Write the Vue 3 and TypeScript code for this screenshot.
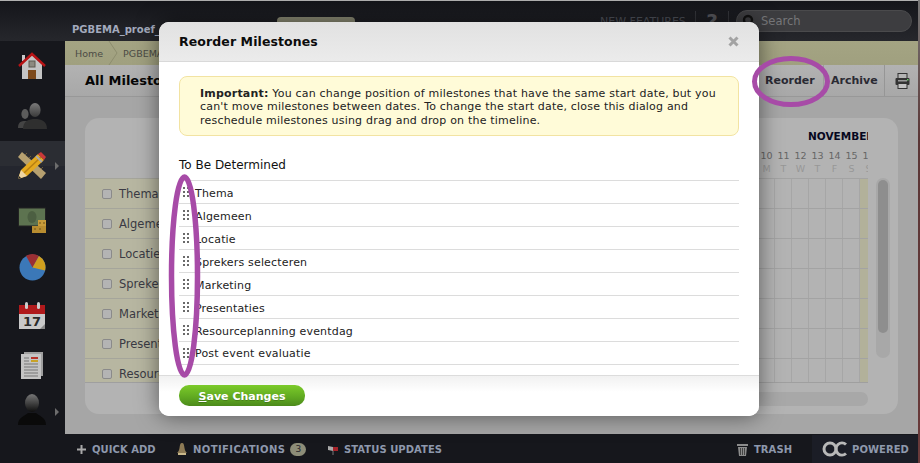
<script setup lang="ts">
const labels = ['Thema', 'Algemeen', 'Locatie', 'Sprekers selecteren', 'Marketing', 'Presentaties', 'Resourceplanning eventdag']
const milestones = ['Thema', 'Algemeen', 'Locatie', 'Sprekers selecteren', 'Marketing', 'Presentaties', 'Resourceplanning eventdag', 'Post event evaluatie']
const days = [
  { n: 10, d: 'M' }, { n: 11, d: 'T' }, { n: 12, d: 'W' }, { n: 13, d: 'T' },
  { n: 14, d: 'F' }, { n: 15, d: 'S' }, { n: 16, d: 'S' },
]
</script>

<template>
  <div class="app">
    <div class="frame">
      <header class="topbar">
        <span class="project">PGBEMA_proef_</span>
        <span class="tab"></span>
        <span class="features">NEW FEATURES</span>
        <span class="divider"></span>
        <span class="help">?</span>
        <span class="divider"></span>
        <div class="search">
          <svg width="14" height="14" viewBox="0 0 14 14"><circle cx="6" cy="6" r="4" fill="none" stroke="#111" stroke-width="2.4"/><path d="M9 9l4 4" stroke="#111" stroke-width="2.4"/></svg>
          <span>Search</span>
        </div>
      </header>

      <div class="middle">
        <nav class="sidebar">
          <div class="nav h50">
            <svg width="28" height="28" viewBox="0 0 28 28">
              <rect x="4" y="3" width="3" height="6" fill="#c9c9c9"/>
              <path d="M4 12 14 3l10 9v15H4z" fill="#c4c4c4"/>
              <path d="M1 14 14 2l13 12" fill="none" stroke="#b81416" stroke-width="2.4"/>
              <rect x="11" y="9" width="6" height="6" fill="#8d8a80" stroke="#5e5a50"/>
              <rect x="10" y="18" width="8" height="9" fill="#7d4a1c"/>
            </svg>
          </div>
          <div class="nav h50">
            <svg width="29" height="26" viewBox="0 0 29 26">
              <defs>
                <linearGradient id="u" x1="0" x2="0" y1="0" y2="1"><stop offset="0" stop-color="#7a7a7a"/><stop offset="1" stop-color="#3a3a3a"/></linearGradient>
              </defs>
              <ellipse cx="7" cy="11" rx="3.6" ry="5" fill="#5c5c5c"/>
              <path d="M0 25c0-6 3-7 7-7s6 2 7 7z" fill="#444"/>
              <ellipse cx="17" cy="7" rx="5.6" ry="7" fill="url(#u)"/>
              <path d="M5 26c0-8 6-10 12-10s12 2 12 10z" fill="#2f2f2f"/>
            </svg>
          </div>
          <div class="nav active h49">
            <svg width="28" height="28" viewBox="0 0 28 28">
              <path d="M4 0 28 21l-5 6L0 5z" fill="#b6a070"/>
              <path d="M7 3l2-2M11 6l2-2M15 10l2-2M19 13l2-2M23 17l2-2" stroke="#6e5c38"/>
              <path d="M0 27l3-9L20 2l6 6L9 24z" fill="#e4a91f"/>
              <path d="M6 21 23 5" stroke="#b87f12" stroke-width="1.500"/>
              <path d="M0 27l3-9 6 6z" fill="#f0d6a4"/>
              <path d="M0 27l1-3 2 2z" fill="#222"/>
              <path d="M20 2l3-2 5 5-2 3z" fill="#c9393a"/>
              <path d="M18 4l6 6" stroke="#aaa" stroke-width="2"/>
            </svg>
            <i class="caret"></i>
          </div>
          <div class="nav h53 money">
            <svg width="29" height="26" viewBox="0 0 29 26">
              <rect x="0.5" y="1" width="27" height="18" fill="#5d7350" stroke="#222"/>
              <ellipse cx="14" cy="10" rx="4.5" ry="6" fill="#4c5f42"/>
              <rect x="14" y="19" width="14" height="7" fill="#b88d30"/>
              <rect x="20" y="13" width="8" height="6" fill="#c89c3a"/>
              <path d="M16 22h2M21 22h2M25 16h2M21 16h2" stroke="#6e5218"/>
            </svg>
          </div>
          <div class="nav h48">
            <svg width="27" height="27" viewBox="0 0 27 27">
              <circle cx="13.5" cy="13.5" r="13" fill="#3b78b8"/>
              <path d="M13.5 13.5 7 1.8A13 13 0 0 1 20 2z" fill="#9a2f33"/>
              <path d="M13.5 13.5 20 2a13 13 0 0 1 6 14.500z" fill="#cf9f1e"/>
            </svg>
          </div>
          <div class="nav h49">
            <svg width="26" height="27" viewBox="0 0 26 27">
              <rect x="0" y="3" width="26" height="24" fill="#c9c9c9"/>
              <rect x="0" y="3" width="26" height="9" fill="#b01a1c"/>
              <rect x="6" y="0" width="3" height="7" rx="1.500" fill="#ccc"/>
              <rect x="18" y="0" width="3" height="7" rx="1.500" fill="#ccc"/>
              <text x="13" y="24" text-anchor="middle" class="calnum">17</text>
              <path d="M21 27l5-5v5z" fill="#888"/>
            </svg>
          </div>
          <div class="nav h50">
            <svg width="22" height="27" viewBox="0 0 22 27">
              <rect x="3" y="0" width="19" height="24" fill="#9f9f9f"/>
              <rect x="0" y="2" width="20" height="25" fill="#c4c4c4"/>
              <rect x="10" y="5" width="7" height="2" fill="#b8332a"/>
              <rect x="10" y="8" width="7" height="2" fill="#c8a227"/>
              <path d="M3 12h14M3 15h14M3 18h14M3 21h14M3 24h14M3 6h5M3 9h5" stroke="#777"/>
            </svg>
          </div>
          <div class="nav last">
            <svg width="28" height="31" viewBox="0 0 28 31">
              <defs>
                <linearGradient id="p" x1="0" x2="0" y1="0" y2="1"><stop offset="0" stop-color="#777"/><stop offset="1" stop-color="#0e0e0e"/></linearGradient>
              </defs>
              <ellipse cx="14" cy="9" rx="7" ry="9" fill="url(#p)"/>
              <path d="M0 31c0-8 7-9 10-12h8c3 3 10 4 10 12z" fill="#0a0a0a"/>
            </svg>
            <i class="caret"></i>
          </div>
        </nav>

        <main class="main">
          <div class="crumbs">
            <span>Home</span>
            <svg class="chev" width="10" height="24" viewBox="0 0 10 24"><path d="M1 0l8 12-8 12" fill="none" stroke="#8c8c6e"/></svg>
            <span>PGBEMA_proef</span>
          </div>
          <div class="titlebar">
            <h1>All Milestones</h1>
            <div class="actions">
              <span class="reorder">Reorder</span>
              <span class="archive">Archive</span>
              <span class="printer">
                <svg width="15" height="16" viewBox="0 0 15 16">
                  <rect x="3" y="0.500" width="9" height="5" fill="#b5b5b5" stroke="#333"/>
                  <rect x="0.500" y="5" width="14" height="7" rx="1" fill="#333"/>
                  <rect x="3" y="7" width="9" height="1.500" fill="#999"/>
                  <rect x="3" y="10.500" width="9" height="5" fill="#c2c2c2" stroke="#333"/>
                  <rect x="12" y="6" width="1.500" height="1.500" fill="#6c6"/>
                </svg>
              </span>
            </div>
          </div>
          <section class="content">
            <div class="panel">
              <div class="board">
                <div class="timehead">
                  <div class="month">NOVEMBER</div>
                  <div class="dayrow">
                    <div v-for="d in days" :key="d.n" class="daycell">
                      <span class="num">{{ d.n }}</span>
                      <span class="dow">{{ d.d }}</span>
                    </div>
                  </div>
                </div>
                <div class="rows">
                  <div v-for="l in labels" :key="l" class="row">
                    <div class="label"><i class="check"></i><span>{{ l }}</span></div>
                    <div class="cells">
                      <i v-for="d in days" :key="d.n" class="cell"></i>
                    </div>
                  </div>
                </div>
                <div class="hscroll"></div>
              </div>
              <div class="vscroll"><i></i></div>
            </div>
          </section>
        </main>
      </div>

      <footer class="bottombar">
        <span class="bitem quick">
          <svg width="9" height="9" viewBox="0 0 9 9"><path d="M4.500 0v9M0 4.500h9" stroke="#a8a8a8" stroke-width="2"/></svg>
          QUICK ADD
        </span>
        <span class="bitem notif">
          <svg width="10" height="13" viewBox="0 0 10 13"><path d="M5 0c2 0 2 2 2.500 5S9 9 10 10H0c1-1 2-2 2.500-5S3 0 5 0z" fill="#8d7a55"/><rect x="1" y="10" width="8" height="2" fill="#c9b88a"/></svg>
          <span class="wide">NOTIFICATIONS</span>
          <b class="badge">3</b>
        </span>
        <span class="bitem status">
          <svg width="11" height="11" viewBox="0 0 11 11"><path d="M1 2l5 1v4L1 6z" fill="#aaa"/><path d="M6 3h5v4H6z" fill="#a5232a"/><path d="M6 7v4" stroke="#777"/></svg>
          STATUS UPDATES
        </span>
        <span class="bitem trash">
          <svg width="11" height="13" viewBox="0 0 11 13"><path d="M0 1h11v2H0zM1 4h9l-1 9H2z" fill="#8c8c8c"/><path d="M3.500 5v7M5.500 5v7M7.500 5v7" stroke="#444"/></svg>
          TRASH
        </span>
        <span class="powered">
          <svg width="25" height="16" viewBox="0 0 25 16"><circle cx="8" cy="8" r="6" fill="none" stroke="#b8b8b8" stroke-width="3"/><path d="M24 3.500a6 6 0 0 0-8 0 6 6 0 0 0 0 9 6 6 0 0 0 8 0" fill="none" stroke="#b8b8b8" stroke-width="3"/></svg>
          POWERED
        </span>
      </footer>
    </div>
    <div class="edge"></div>

    <div class="modal">
      <div class="mhead">
        <h2>Reorder Milestones</h2>
        <svg width="11" height="11" viewBox="0 0 11 11"><path d="M1.500 1.500l8 8M9.500 1.500l-8 8" stroke="#a3a3a3" stroke-width="3"/></svg>
      </div>
      <div class="mbody">
        <div class="notice">
          <b>Important:</b> You can change position of milestones that have the same start date, but you can't move milestones between dates. To change the start date, close this dialog and reschedule milestones using drag and drop on the timeline.
        </div>
        <h3>To Be Determined</h3>
        <ul class="list">
          <li v-for="m in milestones" :key="m">
            <svg class="grip" width="6" height="10" viewBox="0 0 6 10"><g fill="#6a6a6a"><rect x="0" y="0" width="2" height="2"/><rect x="4" y="0" width="2" height="2"/><rect x="0" y="4" width="2" height="2"/><rect x="4" y="4" width="2" height="2"/><rect x="0" y="8" width="2" height="2"/><rect x="4" y="8" width="2" height="2"/></g></svg>
            <span>{{ m }}</span>
          </li>
        </ul>
      </div>
      <div class="mfoot">
        <button class="save"><u>S</u>ave Changes</button>
      </div>
    </div>

    <svg class="marks" width="920" height="463" viewBox="0 0 920 463">
      <ellipse cx="184.500" cy="276" rx="13" ry="99" fill="none" stroke="#a74ba7" stroke-width="5.500"/>
      <ellipse cx="791" cy="81.500" rx="36.500" ry="23" fill="none" stroke="#a74ba7" stroke-width="5"/>
    </svg>
  </div>
</template>

<style>
html, body { margin: 0; background: #16171c; }
</style>

<style scoped>
.app {
  position: relative;
  width: 920px;
  height: 463px;
  overflow: hidden;
  display: flex;
  font-family: "DejaVu Sans", Verdana, sans-serif;
  font-size: 11px;
  color: #111;
}
.frame { width: 918px; display: flex; flex-direction: column; }
.edge { width: 2px; background: linear-gradient(#777, #5a3636 30%, #6a3a3a); }

.topbar {
  height: 41px;
  box-sizing: border-box;
  border-top: 1px solid #b0b0b0;
  background: linear-gradient(#14151a, #26272c);
  display: flex;
  align-items: center;
  flex: none;
  position: relative;
  padding-left: 72px;
}
.project { font-weight: bold; font-size: 10px; color: #a3aabd; margin-top: 16px; width: 205px; }
.tab { width: 78px; height: 5px; margin-top: 16px; background: #868670; border-radius: 4px 4px 0 0; align-self: flex-start; }
.features { margin-left: 245px; font-size: 11px; color: #4c4f57; width: 95px; white-space: nowrap; }
.divider { width: 1px; height: 21px; background: #34353a; }
.help { width: 32px; text-align: center; font-weight: bold; font-size: 20px; color: #55565b; }
.search {
  margin-left: 7px;
  width: 176px;
  height: 22px;
  box-sizing: border-box;
  border: 1px solid #4a4a4c;
  border-radius: 11px;
  background: #3d3d40;
  display: flex;
  align-items: center;
  gap: 5px;
  padding-left: 5px;
  font-size: 11.5px;
  color: #77777a;
}

.middle { flex: 1; display: flex; min-height: 0; }
.sidebar { width: 65px; flex: none; background: #16171c; display: flex; flex-direction: column; }
.nav { position: relative; display: flex; align-items: center; justify-content: center; padding-right: 1px; box-sizing: border-box; }
.h50 { height: 50px; }
.h49 { height: 49px; }
.h53 { height: 53px; }
.h48 { height: 48px; }
.money { padding-top: 7px; }
.last { flex: 1; padding-bottom: 6px; }
.active { background: linear-gradient(#2b2d33 50%, #24262e 50%); }
.caret {
  position: absolute;
  left: 55px;
  top: 50%;
  margin-top: -4px;
  border-left: 4px solid #6d6d6d;
  border-top: 4px solid transparent;
  border-bottom: 4px solid transparent;
}

.main { flex: 1; display: flex; flex-direction: column; min-width: 0; background: #a6a6a6; }
.crumbs {
  height: 24px;
  flex: none;
  background: linear-gradient(#a4a483, #a0a07f);
  display: flex;
  align-items: center;
  padding-left: 10px;
  font-size: 9.5px;
  color: #4b4b45;
  gap: 5px;
}
.titlebar {
  height: 32px;
  flex: none;
  box-sizing: border-box;
  border-bottom: 1px solid #989898;
  background: linear-gradient(#b2b2b2, #a8a8a8);
  display: flex;
  align-items: center;
  justify-content: space-between;
  padding-left: 20px;
}
h1 { margin: 0; font-size: 13px; font-weight: bold; color: #060606; }
.actions { display: flex; align-items: center; height: 100%; font-size: 11px; font-weight: bold; color: #2a2a33; }
.reorder { width: 59px; box-sizing: border-box; border-right: 1px solid #9c9c9c; line-height: 31px; }
.archive { width: 61px; box-sizing: border-box; padding-left: 7px; border-right: 1px solid #969696; line-height: 31px; }
.printer { width: 33px; box-sizing: border-box; padding-left: 10px; display: flex; }

.content { flex: 1; padding: 21px 20px 20px 20px; min-height: 0; }
.panel {
  height: 296px;
  box-sizing: border-box;
  background: #b3b3b3;
  border-radius: 14px;
  display: flex;
  gap: 8px;
  padding-right: 8px;
}
.board { width: 783px; flex: none; display: flex; flex-direction: column; }
.timehead { height: 60px; box-sizing: border-box; padding: 11px 0 0 673px; flex: none; overflow: hidden; }
.month { margin-left: 50px; font-size: 10.5px; font-weight: bold; color: #070720; height: 14px; line-height: 14px; overflow: hidden; white-space: nowrap; width: 60px; }
.dayrow { display: flex; width: 110px; overflow: hidden; margin-top: 6px; }
.daycell { width: 17px; flex: none; display: flex; flex-direction: column; align-items: center; font-size: 9.5px; line-height: 13px; }
.num { color: #666; }
.dow { color: #979797; }
.rows { height: 205px; flex: none; overflow: hidden; border-bottom: 1px solid #9f9f9f; box-sizing: border-box; }
.row { height: 30px; display: flex; }
.label {
  width: 673px;
  box-sizing: border-box;
  background: #b7b6a1;
  border-bottom: 1px solid #a5a59b;
  border-top: 1px solid #a5a59b;
  margin-bottom: -1px;
  display: flex;
  align-items: center;
  gap: 6px;
  padding-left: 17px;
  color: #3a3a44;
  font-size: 11.5px;
  white-space: nowrap;
}
.check { width: 8px; height: 8px; border: 1px solid #8a8a8a; border-radius: 2px; background: #b4b4b4; flex: none; margin-right: 1px; }
.cells { width: 110px; display: flex; overflow: hidden; border-top: 1px solid #a3a3a3; box-sizing: border-box; }
.cell { width: 17px; flex: none; box-sizing: border-box; border-right: 1px solid #a6a6a6; }
.cell:last-child { background: #b2b19a; border-right: 0; width: 9px; }
.hscroll { margin: 9px 0 0 100px; height: 14px; border-radius: 7px; background: #a8a8a8; }
.vscroll { width: 14px; height: 180px; margin-top: 60px; box-sizing: border-box; padding: 2px; border-radius: 7px; background: #a8a8a8; }
.vscroll i { display: block; height: 153px; border-radius: 5px; background: #8e8e8e; }

.bottombar {
  height: 29px;
  flex: none;
  box-sizing: border-box;
  padding-top: 1px;
  background: #16171c;
  display: flex;
  align-items: center;
  font-size: 10px;
  font-weight: bold;
  letter-spacing: 0.05px;
  color: #8e98ac;
  white-space: nowrap;
}
.bitem { display: flex; align-items: center; gap: 6px; }
.quick { margin-left: 77px; width: 100px; }
.notif { width: 150px; }
.wide { letter-spacing: 0.42px; }
.status { width: 410px; }
.trash { width: 75px; }
.badge { width: 16px; height: 13px; line-height: 13px; border-radius: 7px; background: #8d8d78; color: #26262a; text-align: center; font-size: 9px; font-weight: normal; margin-left: -1px; }
.powered { flex: 1; height: 100%; margin-top: -1px; background: #1b1d26; display: flex; align-items: center; gap: 5px; padding: 1px 0 0 10px; box-sizing: border-box; }

.modal {
  position: absolute;
  left: 159px;
  top: 22px;
  width: 600px;
  height: 394px;
  background: #fff;
  border-radius: 10px;
  box-shadow: 0 0 22px rgba(0, 0, 0, 0.5);
  display: flex;
  flex-direction: column;
  overflow: hidden;
}
.mhead {
  height: 40px;
  flex: none;
  box-sizing: border-box;
  border-bottom: 1px solid #d9d9d9;
  background: linear-gradient(#e1e1e1, #ebebeb);
  display: flex;
  align-items: center;
  justify-content: space-between;
  padding: 0 20px;
}
h2 { margin: 0; font-size: 12.5px; font-weight: bold; letter-spacing: 0.1px; color: #0c0c0c; }
.mbody { flex: 1; padding: 14px 20px 0; min-height: 0; }
.notice {
  height: 60px;
  box-sizing: border-box;
  border: 1px solid #f2e3a2;
  border-radius: 8px;
  background: #fffbd8;
  padding: 10px 20px;
  font-size: 11px;
  letter-spacing: 0.2px;
  line-height: 13.3px;
  color: #222;
}
h3 { margin: 0; padding-top: 21px; height: 23px; font-size: 12px; line-height: 16px; font-weight: normal; color: #111; box-sizing: content-box; }
.list { list-style: none; margin: 0; padding: 0; }
.list li {
  height: 23px;
  box-sizing: border-box;
  border-top: 1px solid #dcdcdc;
  display: flex;
  align-items: center;
  padding: 2px 0 0 4px;
  font-size: 11px;
  letter-spacing: 0.17px;
  color: #222;
}
.list li:last-child { height: 24px; border-bottom: 1px solid #dcdcdc; padding-bottom: 1px; }
.grip { margin: -2px 6px 0 0; flex: none; }
.mfoot {
  height: 41px;
  flex: none;
  box-sizing: border-box;
  border-top: 1px solid #dcdcdc;
  background: linear-gradient(#f1f1f1, #fff 40%);
  padding: 9px 20px 0;
}
.save {
  display: block;
  width: 126px;
  height: 21px;
  padding: 1px 0 0;
  border: 0;
  border-radius: 10px;
  background: linear-gradient(#7ccb2a, #5fa821 60%, #4c8a1b);
  color: #fff;
  font: bold 11px "DejaVu Sans", Verdana, sans-serif;
  text-shadow: 0 1px 0 rgba(0, 0, 0, 0.2);
}
.marks { position: absolute; left: 0; top: 0; pointer-events: none; }
.calnum { font: bold 13px "DejaVu Sans", sans-serif; fill: #2b2b2b; }
</style>
